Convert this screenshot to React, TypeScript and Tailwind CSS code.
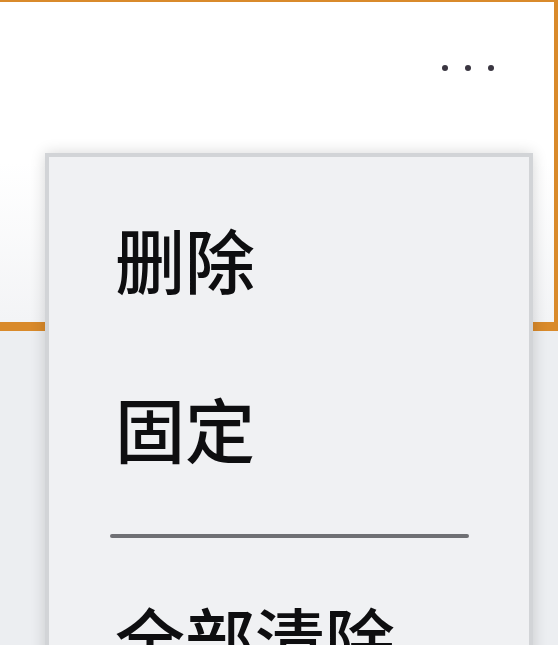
import React from "react";

const menuItems = ["删除", "固定"];

function MoreDots() {
  return (
    <div className="flex justify-end gap-[17px] pr-[60px] pt-[63px]">
      {[0, 1, 2].map((i) => (
        <span key={i} className="block h-[6px] w-[6px] rounded-full bg-[#3a3641]" />
      ))}
    </div>
  );
}

function ContextMenu() {
  return (
    <div className="absolute left-[45px] top-[153px] h-[520px] w-[488px] border-[4px] border-[#d2d4d7] bg-[#f0f1f3] shadow-[0_0_14px_rgba(0,0,0,0.16)]">
      <div className="flex flex-col pt-[67px]">
        {menuItems.map((label, idx) => (
          <div
            key={label}
            className={
              "pl-[66px] text-[70px] font-medium leading-[70px] text-[#0e0e10] " + (idx === 0 ? "" : "mt-[99px]")
            }
          >
            {label}
          </div>
        ))}
        <div className="ml-[61px] mt-[71px] h-[4px] w-[359px] rounded-full bg-[#6f7074]" />
        <div className="mt-[65px] pl-[66px] text-[70px] font-medium leading-[70px] text-[#0e0e10]">全部清除</div>
      </div>
    </div>
  );
}

export default function App() {
  return (
    <div
      className="relative h-[645px] w-[558px] overflow-hidden bg-[#eceef1]"
      style={{ fontFamily: '"Noto Sans CJK SC", "Noto Sans", sans-serif' }}
    >
      <div className="h-[331px] border-t-2 border-r-[4px] border-b-[9px] border-[#d98a2b] bg-gradient-to-b from-white via-white to-[#f3f4f6]">
        <MoreDots />
      </div>
      <ContextMenu />
    </div>
  );
}
